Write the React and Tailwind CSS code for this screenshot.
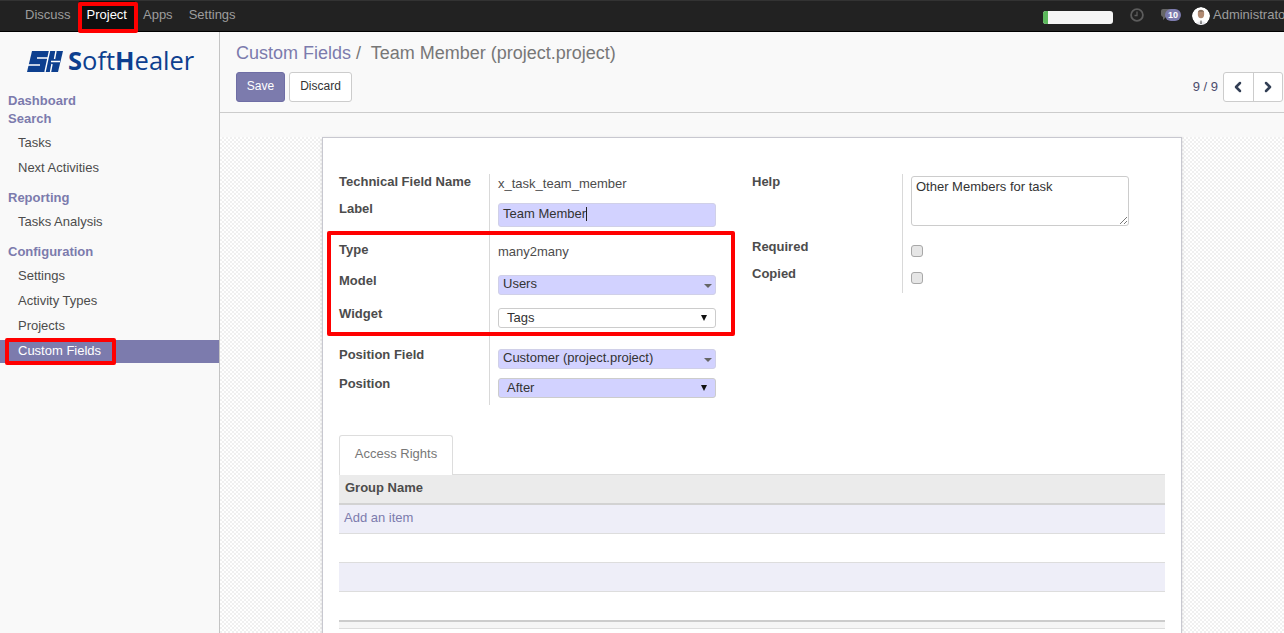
import { ChevronLeft, ChevronRight } from "lucide-react"

const font = "[font-family:'Liberation_Sans',Arial,sans-serif]"

const Logo = () => (
  <div className="flex items-center h-[22px] pl-[27px] gap-[5px]">
    <svg width="36" height="21" viewBox="0 0 36 21" className="shrink-0">
      <path d="M5 0H36L31 21H0Z" fill="#0d3f8f" />
      <path d="M0 14H13M10 7H21M22.5 0L18 21M29 0L27.5 8M25 13L23.5 21M24 10.5H33" stroke="#fff" strokeWidth="1.4" fill="none" />
    </svg>
    <span className="text-[25.5px] leading-none text-[#0d3f8f] [font-family:'Open_Sans',sans-serif]">
      <b>S</b>oft<b>H</b>ealer
    </span>
  </div>
)

const Avatar = () => (
  <svg width="18" height="18" viewBox="0 0 18 18" className="rounded-full">
    <circle cx="9" cy="9" r="9" fill="#fff" />
    <ellipse cx="9" cy="7" rx="3.2" ry="4.2" fill="#b08a72" />
    <path d="M5.8 5.5C6 2.5 12 2.5 12.2 5.5L11.4 4.6H6.6Z" fill="#6a5a50" />
    <path d="M3.5 18C4 13 14 13 14.5 18Z" fill="#e8e8ec" />
    <path d="M8.5 13.5H9.5L9.7 17H8.3Z" fill="#555" />
  </svg>
)

const TopBar = () => (
  <div className="flex items-center justify-between h-8 shrink-0 bg-[#222222] border-t border-b border-t-[#333333] border-b-black pl-[17px] text-[13px] text-[#9d9d9d]">
    <div className="flex h-full">
      <a className="px-2 leading-[28px]">Discuss</a>
      <a className="px-2 leading-[28px] bg-[#0f0f0f] text-white">Project</a>
      <a className="px-2 leading-[28px]">Apps</a>
      <a className="px-2 leading-[28px]">Settings</a>
    </div>
    <div className="flex items-center h-full w-[241px] shrink-0 overflow-hidden">
      <div className="w-[70px] h-[13px] mt-[2px] rounded-[3px] bg-[#f5f5f5] overflow-hidden shrink-0">
        <div className="w-[5px] h-full bg-[#5cb85c]" />
      </div>
      <svg className="ml-[17px] mb-[2px] shrink-0" width="14" height="14" viewBox="0 0 14 14" fill="none" stroke="#5c5c5c" strokeWidth="1.8">
        <circle cx="7" cy="7" r="5.9" />
        <path d="M7 3.5V7.5H4.5" strokeWidth="1.3" />
      </svg>
      <div className="relative ml-[16px] mb-[2px] w-[21px] h-[12px] shrink-0">
        <svg className="absolute left-0 top-0" width="12" height="12" viewBox="0 0 12 12" fill="#666666">
          <path d="M3 0H10A2 2 0 0 1 12 2V6A2 2 0 0 1 10 8H6L3 11V8A3 3 0 0 1 1 6V2A2 2 0 0 1 3 0Z" />
        </svg>
        <span className="absolute right-0 top-0 w-[16px] h-[12px] rounded-full bg-[#7c7bad] text-white text-[9px] font-bold leading-[12px] text-center">10</span>
      </div>
      <div className="ml-[11px] shrink-0 h-[18px]">
        <Avatar />
      </div>
      <span className="ml-[3px] whitespace-nowrap leading-[26px] mb-[2px]">Administrator</span>
    </div>
  </div>
)

const NavHead = ({ children, className = "" }) => (
  <div className={"pl-2 h-[18px] leading-[18px] font-bold text-[#7c7bad] " + className}>{children}</div>
)

const NavItem = ({ children, active }) => (
  <div className={"pl-[18px] " + (active ? "mt-px h-[23px] leading-[22px] bg-[#7c7bad] text-white" : "h-[25px] leading-[23px] text-[#4c4c4c]")}>{children}</div>
)

const Sidebar = () => (
  <div className="w-[220px] shrink-0 bg-[#f9f9f9] border-r border-[#c4c4c4] text-[13px]">
    <div className="pt-[18px] pb-[20px]">
      <Logo />
    </div>
    <NavHead>Dashboard</NavHead>
    <NavHead>Search</NavHead>
    <div className="mt-[3px]">
      <NavItem>Tasks</NavItem>
      <NavItem>Next Activities</NavItem>
    </div>
    <NavHead className="mt-[8px]">Reporting</NavHead>
    <div className="mt-[3px]">
      <NavItem>Tasks Analysis</NavItem>
    </div>
    <NavHead className="mt-[8px]">Configuration</NavHead>
    <div className="mt-[3px]">
      <NavItem>Settings</NavItem>
      <NavItem>Activity Types</NavItem>
      <NavItem>Projects</NavItem>
      <NavItem active>Custom Fields</NavItem>
    </div>
  </div>
)

const ControlPanel = () => (
  <div className="h-[81px] shrink-0 bg-[#f9f9f9] border-b border-[#cccccc] px-4 pt-[10px]">
    <div className="text-[18px] leading-[22px] whitespace-pre">
      <span className="text-[#7c7bad]">Custom Fields</span>
      <span className="text-[#777777]">{" /  Team Member (project.project)"}</span>
    </div>
    <div className="flex items-center mt-2">
      <button className="w-[49px] h-[30px] pb-[2px] rounded-[3px] bg-[#7c7bad] border border-[#6f6ea5] text-white text-[12px]">Save</button>
      <button className="w-[63px] h-[30px] pb-[2px] ml-1 rounded-[3px] bg-white border border-[#cccccc] text-[#333333] text-[12px]">Discard</button>
      <span className="ml-auto text-[13px] text-[#4c4c6c]">9 / 9</span>
      <div className="flex w-[60px] h-[30px] ml-[5px] mr-[-15px] rounded-[3px] bg-white border border-[#cccccc]">
        <div className="flex-1 flex items-center justify-center border-r border-[#cccccc]">
          <ChevronLeft size={16} strokeWidth={3.8} className="text-[#333f55]" />
        </div>
        <div className="flex-1 flex items-center justify-center">
          <ChevronRight size={16} strokeWidth={3.8} className="text-[#333f55]" />
        </div>
      </div>
    </div>
  </div>
)

const Row = ({ h, label, children, labelW = "w-[150px]" }) => (
  <div className="flex" style={{ height: h }}>
    <div className={labelW + " shrink-0 font-bold text-[#4c4c4c] leading-4"}>{label}</div>
    <div className="flex-1 border-l border-[#d9d9d9] pl-2">{children}</div>
  </div>
)

const Arrow = () => (
  <span className="ml-auto mt-[2px] w-0 h-0 border-x-[4px] border-x-transparent border-t-[4px] border-t-[#666666]" />
)

const Many2one = ({ value, className }) => (
  <div className={"flex items-center w-[218px] h-5 pl-[4px] pr-[3px] rounded-[3px] bg-[#d2d2ff] border border-[#d0d0e8] text-[#333333] leading-4 " + className}>
    <span className="mb-[2px]">{value}</span>
    <Arrow />
  </div>
)

const NativeSelect = ({ value, bg, className }) => (
  <div className={"flex items-center w-[218px] h-5 pl-[8px] pr-[8px] rounded-[3px] border border-[#cccccc] text-[#333333] " + bg + " " + className}>
    <span>{value}</span>
    <span className="ml-auto w-0 h-0 border-x-[3.5px] border-x-transparent border-t-[6px] border-t-[#111111]" />
  </div>
)

const Checkbox = ({ className }) => (
  <div className={"w-3 h-3 rounded-[3px] bg-[#e6e6e6] border border-[#a8a8a8] " + className} />
)

const Form = () => (
  <div className="flex text-[13px]">
    <div className="w-[395px] shrink-0">
      <Row h={27} label="Technical Field Name">
        <div className="pt-[2px] leading-4 text-[#4c4c4c]">x_task_team_member</div>
      </Row>
      <Row h={41} label="Label">
        <div className="flex items-center w-[218px] h-6 mt-[2px] pl-[4px] pb-[2px] rounded-[3px] bg-[#d2d2ff] border border-[#d0d0e8] text-[#333333]">
          Team Member<span className="w-px h-[14px] bg-[#222222]" />
        </div>
      </Row>
      <Row h={31} label="Type">
        <div className="pt-[2px] leading-4 text-[#4c4c4c]">many2many</div>
      </Row>
      <Row h={33} label="Model">
        <Many2one value="Users" className="mt-[2px]" />
      </Row>
      <Row h={41} label="Widget">
        <NativeSelect value="Tags" bg="bg-white" className="mt-[2px]" />
      </Row>
      <Row h={29} label="Position Field">
        <Many2one value="Customer (project.project)" className="mt-[2px]" />
      </Row>
      <Row h={29} label="Position">
        <NativeSelect value="After" bg="bg-[#d2d2ff]" className="mt-[2px]" />
      </Row>
    </div>
    <div className="ml-[18px] w-[377px]">
      <Row h={65} label="Help">
        <div className="relative w-[218px] h-[50px] mt-[2px] px-[4px] py-[2px] rounded-[3px] bg-white border border-[#cccccc] text-[#333333] leading-4">
          Other Members for task
          <svg className="absolute right-px bottom-px" width="8" height="8" viewBox="0 0 8 8" stroke="#555555" strokeWidth="0.8">
            <path d="M1 8L8 1M5 8L8 5" />
          </svg>
        </div>
      </Row>
      <Row h={27} label="Required">
        <Checkbox className="mt-[6px]" />
      </Row>
      <Row h={27} label="Copied">
        <Checkbox className="mt-[6px]" />
      </Row>
    </div>
  </div>
)

const AccessTable = () => (
  <div className="mt-[30px] text-[13px]">
    <div className="relative flex w-[114px] h-[40px] pb-[3px] items-center justify-center bg-white border border-b-0 border-[#dddddd] rounded-t-[3px] text-[#777777] -mb-px">
      Access Rights
    </div>
    <div className="h-[31px] pl-[6px] leading-[26px] bg-[#ebebeb] border-t border-b-2 border-t-[#dddddd] border-b-[#d2d2d2] font-bold text-[#4c4c4c]">Group Name</div>
    <div className="h-[29px] pl-[5px] leading-[26px] bg-[#eeeef8] border-b border-[#dddddd] text-[#7c7bad]">Add an item</div>
    <div className="h-[29px] bg-white border-b border-[#dddddd]" />
    <div className="h-[29px] bg-[#eeeef8] border-b border-[#dddddd]" />
    <div className="h-[28px] bg-white" />
    <div className="h-[9px] bg-[#f5f5f5] border-t-2 border-b border-t-[#cccccc] border-b-[#dddddd]" />
  </div>
)

export default function App() {
  return (
    <div className={"relative flex flex-col h-screen overflow-hidden bg-white " + font}>
      <TopBar />
      <div className="flex flex-1 min-h-0">
        <Sidebar />
        <div className="flex-1 min-w-0 flex flex-col">
          <ControlPanel />
          <div className="flex-1 min-h-0 bg-[#f9f9f9] pt-[24px] overflow-hidden">
            <div className="h-full bg-[repeating-conic-gradient(#f0f0f0_0_25%,#ffffff_0_50%)] bg-[length:4px_4px]">
              <div className="w-[860px] h-full ml-[102px] bg-white border border-b-0 border-[#c8c8d0] shadow-[0_1px_3px_rgba(0,0,0,0.15)] px-4 pt-[36px]">
                <Form />
                <AccessTable />
              </div>
            </div>
          </div>
        </div>
      </div>
      <div className="absolute left-[78px] top-[2px] w-[60px] h-[31px] border-4 border-[#ff0000] rounded-[2px]" />
      <div className="absolute left-[5px] top-[338px] w-[111px] h-[27px] border-4 border-[#ff0000] rounded-[2px]" />
      <div className="absolute left-[327px] top-[231px] w-[408px] h-[105px] border-4 border-[#ff0000] rounded-[2px]" />
    </div>
  )
}
